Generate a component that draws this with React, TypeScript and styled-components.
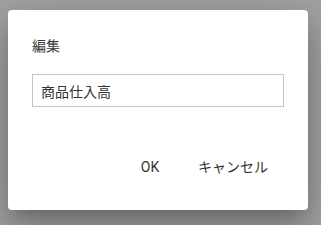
import React from "react";
import styled, { createGlobalStyle } from "styled-components";

const GlobalStyle = createGlobalStyle`
  html, body {
    margin: 0;
    padding: 0;
    width: 100%;
    height: 100%;
    background: #a2a2a2;
    font-family: Roboto, "Noto Sans CJK JP", sans-serif;
  }
  #root {
    height: 100%;
  }
`;

const App = () => {
  return (
    <>
      <GlobalStyle />
      <Backdrop>
        <Dialog>
          <Title>編集</Title>
          <Input defaultValue="商品仕入高" />
          <Actions>
            <Button>OK</Button>
            <Button>キャンセル</Button>
          </Actions>
        </Dialog>
      </Backdrop>
    </>
  );
};

export default App;

const Backdrop = styled.div`
  display: flex;
  padding: 10px 0 0 8px;
  height: 100%;
  box-sizing: border-box;
`;

const Dialog = styled.div`
  width: 300px;
  height: 200px;
  box-sizing: border-box;
  background: #fff;
  border-radius: 4px;
  box-shadow: 0 11px 15px -7px rgba(0, 0, 0, 0.2),
    0 24px 38px 3px rgba(0, 0, 0, 0.14), 0 9px 46px 8px rgba(0, 0, 0, 0.12);
  padding: 26px 24px 0 24px;
  display: flex;
  flex-direction: column;
`;

const Title = styled.div`
  font-size: 14px;
  line-height: 20px;
  color: #3a3a3a;
  margin-bottom: 18px;
`;

const Input = styled.input`
  width: 252px;
  height: 33px;
  box-sizing: border-box;
  border: 1px solid #c4c4c4;
  border-radius: 0;
  padding: 0 8px;
  font-family: Roboto, "Noto Sans CJK JP", sans-serif;
  font-size: 14px;
  color: #333;
  outline: none;
`;

const Actions = styled.div`
  display: flex;
  justify-content: flex-end;
  gap: 8px;
  margin-top: 44px;
  padding-right: 8px;
`;

const Button = styled.button`
  border: none;
  background: transparent;
  min-width: 64px;
  font-family: Roboto, "Noto Sans CJK JP", sans-serif;
  font-size: 14px;
  color: #333;
  padding: 6px 8px;
  line-height: 20px;
  cursor: pointer;
`;
